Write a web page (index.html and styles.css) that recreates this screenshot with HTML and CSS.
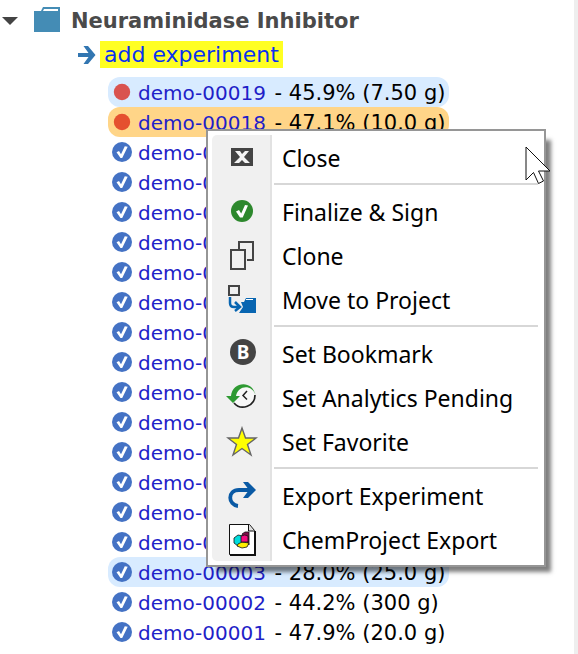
FILE: index.html
```
<!DOCTYPE html>
<html lang="en">
<head>
<meta charset="utf-8">
<title>Neuraminidase Inhibitor</title>
<link rel="stylesheet" href="styles.css">
</head>
<body>
<svg class="defs" aria-hidden="true">
  <symbol id="running" viewBox="0 0 20 20"><circle cx="10" cy="10" r="8.200"/></symbol>
  <symbol id="done" viewBox="0 0 20 20"><circle cx="10" cy="10" r="10" fill="#4472c4"/><path d="M4.500 10.300 7 9l2 3.200L12.800 4.300l2.900.4L10.200 16H8.500z" fill="#fff"/></symbol>
</svg>
<main class="project">
  <header class="project-head">
    <svg class="caret" viewBox="0 0 16 8" aria-hidden="true"><path d="M0 0h16L8 8z" fill="#444"/></svg>
    <svg class="folder" viewBox="0 0 30 26" aria-hidden="true"><path d="M2 5h7l2-4h17v25H2z" fill="#448cb5"/><path d="M12 3h14v2H11z" fill="#fff"/></svg>
    <h1 class="title">Neuraminidase Inhibitor</h1>
  </header>
  <p class="add">
    <svg class="add-arrow" viewBox="0 0 18 18" aria-hidden="true"><path d="M0 7h10.500L5.500 0H10l7.500 9L10 18H5.500l5-7H0z" fill="#3276b1"/></svg>
    <a class="add-link" href="#add">add experiment</a>
  </p>
  <ul class="experiments">
    <li class="row blue"><svg class="status red"><use href="#running"/></svg><span><a href="#19">demo-00019</a> - 45.9% (7.50 g)</span></li>
    <li class="row orange"><svg class="status scarlet"><use href="#running"/></svg><span><a href="#18">demo-00018</a> - 47.1% (10.0 g)</span>
      <div class="menu" role="menu">
        <button class="item" role="menuitem"><svg class="icon" viewBox="0 0 32 32"><path d="M5 6h22v18H5z" fill="#444"/><path d="M9 9h5l2 3 3-3h4l-5 6 6 6h-5l-3-3-3 3H8l6-6z" fill="#f4f4f4"/></svg>Close</button>
        <hr>
        <button class="item" role="menuitem"><svg class="icon" viewBox="0 0 32 32"><circle cx="16" cy="15" r="11" fill="#2d882d"/><path d="m10 15.500 3-1.500 2.200 3.500L19 9l3 .5-5.300 12H14z" fill="#fff"/></svg>Finalize &amp; Sign</button>
        <button class="item" role="menuitem"><svg class="icon" viewBox="0 0 32 32"><path d="M13 10V2h14v18h-6M5 10h14v19H5z" fill="none" stroke="#444" stroke-width="2"/></svg>Clone</button>
        <button class="item" role="menuitem"><svg class="icon" viewBox="0 0 32 32"><path d="M3 2h10v9H3z" fill="none" stroke="#444" stroke-width="2"/><path d="M15 18h3l2-4h10v15H13l4-6z" fill="#0865b1"/><path d="M20 15.500h7" stroke="#fff"/><path d="M4 13v6q0 4 4 4h5M9 18l5 5-5 4" fill="none" stroke="#0865b1" stroke-width="2.500"/></svg>Move to Project</button>
        <hr>
        <button class="item" role="menuitem"><span class="icon bookmark" aria-hidden="true">B</span>Set Bookmark</button>
        <button class="item" role="menuitem"><svg class="icon" viewBox="0 0 32 32"><circle cx="17" cy="14" r="11" fill="#f8f8f8"/><path d="M8 21a12 12 0 0 0 21-8" fill="none" stroke="#222" stroke-width="1.700"/><path d="M0 14h5C6 0 26-3 29.500 13 26 2 12 3 10 14h4l-7 7z" fill="#2e9a32"/><path d="m21 9-4 4.500 4 4" fill="none" stroke="#222" stroke-width="1.500"/></svg>Set Analytics Pending</button>
        <button class="item" role="menuitem"><svg class="icon" viewBox="0 0 32 32"><path d="m16 2 3.500 10H30l-8.500 6.500L25 29l-9-6.500L7 29l3.500-10.500L2 12h10.500z" fill="#ff0" stroke="#666" stroke-width="1.400"/></svg>Set Favorite</button>
        <hr>
        <button class="item" role="menuitem"><svg class="icon" viewBox="0 0 32 32"><path d="M12 26C2 25 1 10 13 10h14" fill="none" stroke="#0a5aa5" stroke-width="3.800"/><path d="M17 2h5l8 8-8 8h-5l6-8z" fill="#0a5aa5"/></svg>Export Experiment</button>
        <button class="item" role="menuitem"><svg class="icon" viewBox="0 0 32 32"><path d="M3.500.5h20l5 6v24h-25z" fill="#fff" stroke="#111"/><path d="M22.500 1v6H28" fill="#ddd" stroke="#111"/><path d="M4 31h25V7" fill="none" stroke="#111" stroke-width="2"/><g stroke="#111" stroke-width=".8"><path d="m8 14 4-3 5 1v8l-5 2-4-3z" fill="#0dd"/><path d="m16 10 3-2h4v13l-3-4z" fill="#80104a"/><path d="m12 20 4-2 7 1-2 4-5 1-5-2z" fill="#fe0"/><path d="M15 12q4-2 7 0v6h-7z" fill="#f20d80"/></g></svg>ChemProject Export</button>
        <svg class="pointer" viewBox="0 0 26 40" aria-hidden="true"><path d="M1 1v33l7.500-7.500 5 11 5-2.500-5-10H25z" fill="#fff" stroke="#111"/></svg>
      </div>
    </li>
    <li class="row"><svg class="status"><use href="#done"/></svg><span><a href="#17">demo-00017</a></span></li>
    <li class="row"><svg class="status"><use href="#done"/></svg><span><a href="#16">demo-00016</a></span></li>
    <li class="row"><svg class="status"><use href="#done"/></svg><span><a href="#15">demo-00015</a></span></li>
    <li class="row"><svg class="status"><use href="#done"/></svg><span><a href="#14">demo-00014</a></span></li>
    <li class="row"><svg class="status"><use href="#done"/></svg><span><a href="#13">demo-00013</a></span></li>
    <li class="row"><svg class="status"><use href="#done"/></svg><span><a href="#12">demo-00012</a></span></li>
    <li class="row"><svg class="status"><use href="#done"/></svg><span><a href="#11">demo-00011</a></span></li>
    <li class="row"><svg class="status"><use href="#done"/></svg><span><a href="#10">demo-00010</a></span></li>
    <li class="row"><svg class="status"><use href="#done"/></svg><span><a href="#9">demo-00009</a></span></li>
    <li class="row"><svg class="status"><use href="#done"/></svg><span><a href="#8">demo-00008</a></span></li>
    <li class="row"><svg class="status"><use href="#done"/></svg><span><a href="#7">demo-00007</a></span></li>
    <li class="row"><svg class="status"><use href="#done"/></svg><span><a href="#6">demo-00006</a></span></li>
    <li class="row"><svg class="status"><use href="#done"/></svg><span><a href="#5">demo-00005</a></span></li>
    <li class="row"><svg class="status"><use href="#done"/></svg><span><a href="#4">demo-00004</a></span></li>
    <li class="row blue"><svg class="status"><use href="#done"/></svg><span><a href="#3">demo-00003</a> - 28.0% (25.0 g)</span></li>
    <li class="row"><svg class="status"><use href="#done"/></svg><span><a href="#2">demo-00002</a> - 44.2% (300 g)</span></li>
    <li class="row"><svg class="status"><use href="#done"/></svg><span><a href="#1">demo-00001</a> - 47.9% (20.0 g)</span></li>
  </ul>
</main>
</body>
</html>
```
FILE: styles.css
```
* { box-sizing: border-box; }
body {
  margin: 0;
  background: #fff;
  color: #000;
  font: 21px/30px Verdana, "DejaVu Sans", sans-serif;
}
.defs { position: absolute; width: 0; height: 0; }
.project {
  min-height: 100vh;
  border-right: 4px solid #eee;
}
.project-head {
  display: flex;
  align-items: center;
  height: 41px;
  padding-left: 2px;
}
.caret { width: 16px; height: 8px; }
.folder { width: 30px; height: 26px; margin: 0 9px 4px 14px; }
.title {
  margin: 0;
  color: #4a4a4a;
  font-size: 21px;
  white-space: nowrap;
}
.add {
  display: flex;
  align-items: center;
  gap: 4px;
  margin: 0 0 9px;
  padding-left: 78px;
  height: 27px;
}
.add-arrow { width: 18px; height: 18px; }
.add-link {
  padding: 0 4px;
  background: #ff2;
  color: #0a32f0;
  font-size: 22px;
  line-height: 27px;
  text-decoration: none;
}
.experiments {
  display: flex;
  flex-direction: column;
  align-items: flex-start;
  margin: 0;
  padding: 0 0 0 108px;
  list-style: none;
}
.row {
  position: relative;
  display: flex;
  align-items: center;
  gap: 6px;
  height: 30px;
  padding: 0 4px;
  border-radius: 12px;
  white-space: nowrap;
}
.row > span { padding-top: 2px; }
.row a {
  margin-right: 2px;
  color: #1f1fc8;
  font-size: 20px;
  text-decoration: none;
}
.blue { background: #d8ebff; }
.orange { background: #ffd588; z-index: 1; }
.status { width: 20px; height: 20px; }
.red { fill: #d9534f; }
.scarlet { fill: #e5502f; }
.menu {
  position: absolute;
  top: 22px;
  left: 98px;
  min-width: 340px;
  padding: 6px 6px 2px 4px;
  border: 2px solid #969696;
  background: #fff;
  box-shadow: 8px 8px 4px -3px rgba(0, 0, 0, .5);
}
.menu::before {
  content: "";
  position: absolute;
  top: 4px;
  bottom: 4px;
  left: 4px;
  width: 58px;
  border-right: 2px solid #e2e2e2;
  border-radius: 5px 0 0 5px;
  background: #f0f0f0;
}
.item {
  position: relative;
  display: flex;
  align-items: center;
  gap: 24px;
  width: 100%;
  height: 44px;
  padding: 0 0 2px 14px;
  border: 0;
  background: none;
  color: #000;
  font: 23px/42px "Noto Sans", sans-serif;
  text-align: left;
}
.icon { flex: none; width: 32px; height: 32px; }
.bookmark {
  width: 26px;
  height: 26px;
  margin: 0 2px 4px 4px;
  border-radius: 50%;
  background: #444;
  color: #fff;
  font-size: 19px;
  font-weight: bold;
  line-height: 26px;
  text-align: center;
}
.menu hr {
  height: 2px;
  margin: 2px 0 6px 62px;
  border: 0;
  background: #d7d7d7;
}
.pointer {
  position: absolute;
  top: 15px;
  right: -7px;
  width: 26px;
  height: 40px;
}
```
